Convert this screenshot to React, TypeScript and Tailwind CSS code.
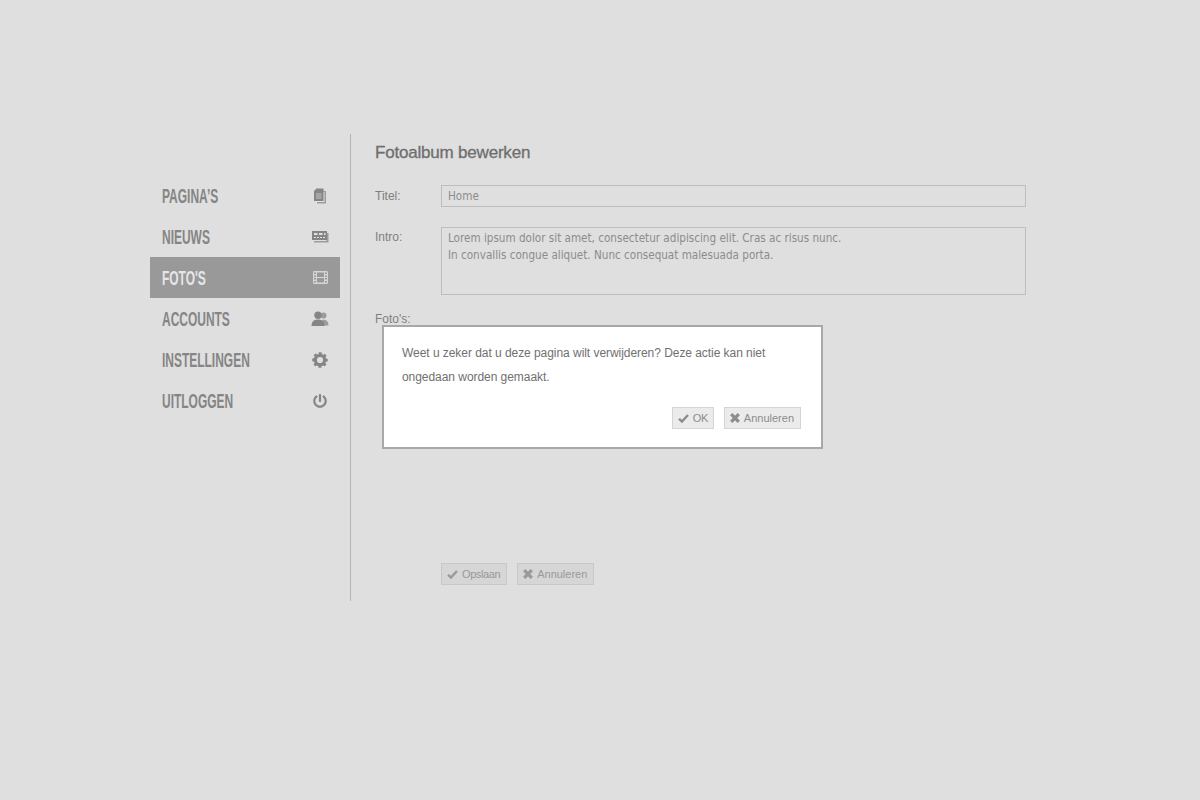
import { FaPowerOff } from "react-icons/fa"
import type { ReactNode } from "react"

function PagesIcon() {
  return (
    <svg width="14" height="16" viewBox="0 0 14 16" fill="currentColor">
      <path d="M3 3h10v12.500H4V14h7.500V4H3z" opacity="0.75" />
      <path d="M3.500 0.500h7v12.500H1V3z" />
      <path d="M3 5.500h5.500v1H3zM3 7.500h5.500v1H3zM3 9.500h5.500v1H3z" fill="#dfdfdf" opacity="0.7" />
    </svg>
  )
}

function NewsIcon() {
  return (
    <svg width="18" height="13" viewBox="0 0 18 13" fill="currentColor">
      <path d="M15.500 3H17.500v9.500H3V11h12.500z" opacity="0.75" />
      <path d="M1 1h15v9H1z" />
      <path d="M3 3h3.500v2H3zM8 3h3.500v2H8zM3 7h2v1H3zM6 7h2v1H6zM9 7h2v1H9zM12 7h2v1h-2zM13 3h1.500v2H13z" fill="#dfdfdf" />
    </svg>
  )
}

function FilmIcon() {
  return (
    <svg width="15" height="13" viewBox="0 0 15 13" fill="currentColor" opacity="0.8">
      <path
        fillRule="evenodd"
        d="M1.500 0h12A1.500 1.500 0 0 1 15 1.500v10a1.500 1.500 0 0 1-1.500 1.500h-12A1.500 1.500 0 0 1 0 11.500v-10A1.500 1.500 0 0 1 1.500 0zM1 1.500v1.500h2V1.500zM1 4.500V6h2V4.500zM1 7v1.500h2V7zM1 10v1.500h2V10zM12 1.500V3h2V1.500zM12 4.500V6h2V4.500zM12 7v1.500h2V7zM12 10v1.500h2V10zM4 1.500V6h7V1.500zM4 7v4.500h7V7z"
      />
    </svg>
  )
}

function UsersIcon() {
  return (
    <svg width="18" height="16" viewBox="0 0 18 16" fill="currentColor">
      <circle cx="12.500" cy="4.500" r="3" opacity="0.75" />
      <path d="M11 9c3.500-1 6.500 1 6.500 5.500H13z" opacity="0.75" />
      <circle cx="7" cy="4.200" r="3.700" />
      <path d="M0.500 15c0-4.500 2.500-6.500 6.500-6.500S13.500 10.500 13.500 15z" />
    </svg>
  )
}

function GearIcon() {
  return (
    <svg width="16" height="16" viewBox="0 0 16 16" fill="none" stroke="currentColor">
      <circle cx="8" cy="8" r="4.700" strokeWidth="3.200" />
      <circle cx="8" cy="8" r="6.800" strokeWidth="2" strokeDasharray="3 2.340" strokeDashoffset="1.500" />
    </svg>
  )
}

function CheckIcon() {
  return (
    <svg width="11" height="9" viewBox="0 0 11 9" fill="none" stroke="currentColor" strokeWidth="2.400">
      <path d="M1 4.800 4 7.500 10 1" />
    </svg>
  )
}

function CrossIcon() {
  return (
    <svg width="10" height="10" viewBox="0 0 10 10" fill="none" stroke="currentColor" strokeWidth="3.200">
      <path d="M1.200 1.200 8.800 8.800M8.800 1.200 1.200 8.800" />
    </svg>
  )
}

const navItems: { label: string; icon: ReactNode; active?: boolean }[] = [
  { label: "PAGINA’S", icon: <PagesIcon /> },
  { label: "NIEUWS", icon: <NewsIcon /> },
  { label: "FOTO'S", icon: <FilmIcon />, active: true },
  { label: "ACCOUNTS", icon: <UsersIcon /> },
  { label: "INSTELLINGEN", icon: <GearIcon /> },
  { label: "UITLOGGEN", icon: <FaPowerOff size={14} /> },
]

function NavItem({ label, icon, active }: { label: string; icon: ReactNode; active?: boolean }) {
  return (
    <a
      className={
        active
          ? "flex h-[41px] items-center bg-[#999999] pl-3 text-[#e6e6e6]"
          : "flex h-[41px] items-center pl-3 text-[#858585]"
      }
    >
      <span className="w-[138px] origin-left scale-x-[0.57] whitespace-nowrap font-['Liberation_Sans',sans-serif] text-[21px] font-bold leading-none">
        {label}
      </span>
      <span className="flex w-10 justify-center">{icon}</span>
    </a>
  )
}

function Button({ label, icon, tight }: { label: string; icon: ReactNode; tight?: boolean }) {
  return (
    <button
      className={
        tight
          ? "flex h-[22px] items-center gap-1 border border-[#c8c8c8] bg-[#d6d6d6] pl-[5px] pr-[6px] text-[11px] tracking-[-0.4px] text-[#999999]"
          : "flex h-[22px] items-center gap-1 border border-[#c8c8c8] bg-[#d6d6d6] pl-[5px] pr-[6px] text-[11px] text-[#999999]"
      }
    >
      {icon}
      {label}
    </button>
  )
}

function DialogButton({ label, icon, tight }: { label: string; icon: ReactNode; tight?: boolean }) {
  return (
    <button
      className={
        tight
          ? "flex h-[22px] items-center gap-1 border border-[#d4d4d4] bg-[#ebebeb] pl-[5px] pr-[5px] text-[11px] tracking-[-0.4px] text-[#8c8c8c]"
          : "flex h-[22px] items-center gap-1 border border-[#d4d4d4] bg-[#ebebeb] pl-[5px] pr-[6px] text-[11px] tracking-normal text-[#8c8c8c]"
      }
    >
      {icon}
      {label}
    </button>
  )
}

export default function App() {
  return (
    <div className="min-h-[800px] bg-[#dfdfdf] pl-[150px] pt-[134px] font-['Liberation_Sans',Arial,sans-serif]">
      <div className="flex h-[467px] w-[876px]">
        <nav className="w-[190px] pt-[41px]">
          {navItems.map((item) => (
            <NavItem key={item.label} {...item} />
          ))}
        </nav>
        <div className="ml-[10px] w-px bg-[#b4b4b4]" />
        <main className="relative ml-6 flex-1 text-[12px] text-[#808080]">
          <h1 className="mt-[9px] text-[17px] leading-5 tracking-[-0.2px] text-[#6e6e6e] [-webkit-text-stroke:0.3px_#6e6e6e]">
            Fotoalbum bewerken
          </h1>
          <div className="mt-[22px] flex">
            <label className="w-[66px] pt-[3px] leading-4">Titel:</label>
            <div className="h-[22px] w-[585px] border border-[#bdbdbd] px-[6px] font-['DejaVu_Sans_Condensed','DejaVu_Sans',sans-serif] text-[11.6px] leading-[21px] text-[#8c8c8c]">
              Home
            </div>
          </div>
          <div className="mt-5 flex">
            <label className="w-[66px] pt-[2px] leading-4">Intro:</label>
            <div className="h-[68px] w-[585px] border border-[#bdbdbd] px-[6px] pt-[2px] font-['DejaVu_Sans_Condensed','DejaVu_Sans',sans-serif] text-[11.6px] leading-[17px] text-[#8c8c8c]">
              Lorem ipsum dolor sit amet, consectetur adipiscing elit. Cras ac risus nunc.
              <br />
              In convallis congue aliquet. Nunc consequat malesuada porta.
            </div>
          </div>
          <label className="mt-4 block leading-4">Foto's:</label>
          <div className="mt-[236px] flex gap-[10px] pl-[66px]">
            <Button label="Opslaan" icon={<CheckIcon />} tight />
            <Button label="Annuleren" icon={<CrossIcon />} />
          </div>
          <div className="absolute left-[7px] top-[191px] h-[124px] w-[441px] border-2 border-[#a8a8a8] bg-white pl-[18px] pr-[19px] pt-[14px] tracking-[-0.05px] text-[#707070]">
            <p className="leading-6">
              Weet u zeker dat u deze pagina wilt verwijderen? Deze actie kan niet ongedaan worden gemaakt.
            </p>
            <div className="mt-[18px] flex justify-end gap-[10px] pr-px">
              <DialogButton label="OK" icon={<CheckIcon />} tight />
              <DialogButton label="Annuleren" icon={<CrossIcon />} />
            </div>
          </div>
        </main>
      </div>
    </div>
  )
}
